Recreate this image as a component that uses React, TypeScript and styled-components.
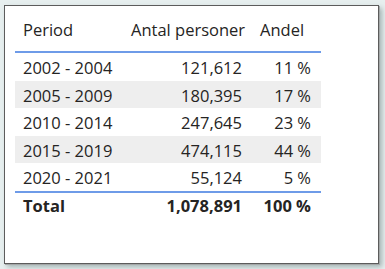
import styled, { createGlobalStyle } from 'styled-components';

const GlobalStyle = createGlobalStyle`
  html, body {
    margin: 0;
    padding: 0;
    background: #e7efef;
  }
  body {
    width: 385px;
    height: 269px;
    overflow: hidden;
    font-family: "Open Sans", "Noto Sans", sans-serif;
    color: #252423;
  }
`;

const Stage = styled.div`
  padding: 5px 0 0 4px;
`;

const Card = styled.div`
  box-sizing: border-box;
  width: 375px;
  height: 259px;
  background: #ffffff;
  border: 1px solid #5c5c5c;
  box-shadow: 1px 1px 0 #a4a8a8, 3px 3px 5px rgba(110, 130, 130, 0.55);
  padding: 8px 0 0 10px;
`;

const Table = styled.div`
  display: grid;
  grid-template-columns: 108px 129px 69px;
  width: 306px;
  font-size: 16.5px;
`;

const HeadRow = styled.div`
  display: contents;
`;

const HeadCell = styled.div`
  line-height: 28px;
  padding: 2px 0 7px 8px;
  border-bottom: 2px solid #6e9be8;
  white-space: nowrap;
`;

const Row = styled.div<{ $shaded?: boolean }>`
  display: contents;
  & > div {
    background: ${(p) => (p.$shaded ? '#eeeeee' : '#ffffff')};
  }
`;

const Cell = styled.div<{ $right?: boolean; $last?: boolean }>`
  height: 27.5px;
  line-height: 29px;
  padding: 0 ${(p) => (p.$right ? '10px' : '0')} 0 ${(p) => (p.$right ? '0' : '8px')};
  text-align: ${(p) => (p.$right ? 'right' : 'left')};
  white-space: nowrap;
  border-bottom: ${(p) => (p.$last ? '2px solid #6e9be8' : 'none')};
`;

const TotalCell = styled.div<{ $right?: boolean }>`
  font-weight: 700;
  line-height: 26px;
  padding: 0 ${(p) => (p.$right ? '10px' : '0')} 0 ${(p) => (p.$right ? '0' : '8px')};
  text-align: ${(p) => (p.$right ? 'right' : 'left')};
  white-space: nowrap;
`;

const rows = [
  { period: '2002 - 2004', count: '121,612', share: '11 %' },
  { period: '2005 - 2009', count: '180,395', share: '17 %' },
  { period: '2010 - 2014', count: '247,645', share: '23 %' },
  { period: '2015 - 2019', count: '474,115', share: '44 %' },
  { period: '2020 - 2021', count: '55,124', share: '5 %' },
];

const App = () => {
  return (
    <>
      <GlobalStyle />
      <Stage>
        <Card>
          <Table>
            <HeadRow>
              <HeadCell>Period</HeadCell>
              <HeadCell>Antal personer</HeadCell>
              <HeadCell>Andel</HeadCell>
            </HeadRow>
            {rows.map((r, i) => {
              const last = i === rows.length - 1;
              return (
                <Row key={r.period} $shaded={i % 2 === 1}>
                  <Cell $last={last}>{r.period}</Cell>
                  <Cell $right $last={last}>{r.count}</Cell>
                  <Cell $right $last={last}>{r.share}</Cell>
                </Row>
              );
            })}
            <TotalCell>Total</TotalCell>
            <TotalCell $right>1,078,891</TotalCell>
            <TotalCell $right>100 %</TotalCell>
          </Table>
        </Card>
      </Stage>
    </>
  );
};

export default App;
